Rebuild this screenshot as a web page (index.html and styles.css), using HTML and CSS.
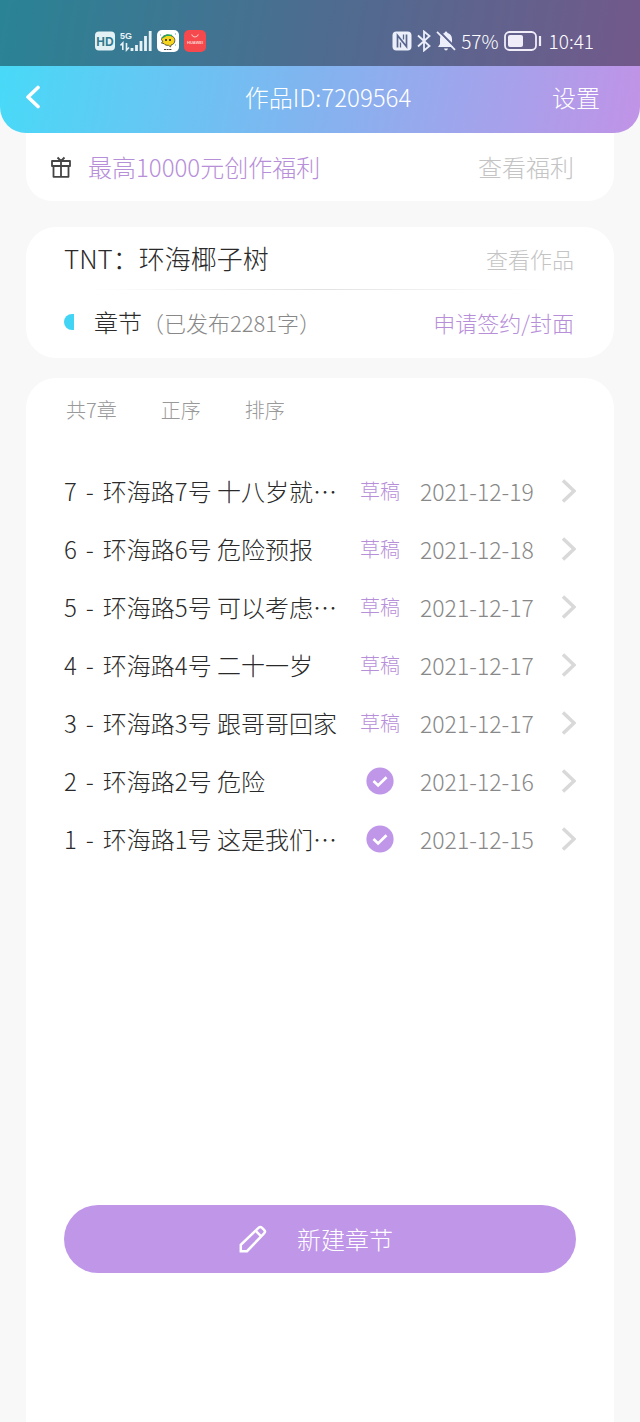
FILE: index.html
```html
<!DOCTYPE html>
<html lang="zh-CN">
	<head>
		<meta charset="UTF-8">
		<meta name="viewport" content="width=device-width, initial-scale=1">
		<title>作品ID:7209564</title>
		<link rel="stylesheet" href="styles.css">
	</head>
	<body>
		<!-- 公用图标 -->
		<svg class="defs" width="0" height="0">
			<symbol id="arrow" viewBox="0 0 14 24">
				<path d="M1 1.5 12 12 1 22.5" fill="none" stroke="#d9d9d9" stroke-width="3.4"/>
			</symbol>
			<symbol id="done" viewBox="0 0 28 28">
				<circle cx="14" cy="14" r="13.6" fill="#bf96e8"/>
				<path d="M7.5 14l4.6 4.4 8.4-8.2" fill="none" stroke="#fff" stroke-width="2.8"/>
			</symbol>
		</svg>

		<header class="header">
			<div class="status-bar">
				<div class="status-group">
					<svg width="20" height="20" viewBox="0 0 20 20">
						<rect x="0" y="0.5" width="20" height="19" rx="4" fill="#e3f1f5"/>
						<text class="hd" x="10" y="14.5" text-anchor="middle">HD</text>
					</svg>
					<svg width="32" height="22" viewBox="0 0 32 22">
						<text class="net" x="0" y="9">5G</text>
						<path d="M2.8 20v-7L.5 15.5M6.5 13v7l2.500-2.500" fill="none" stroke="#e8f2f6" stroke-width="1.6"/>
						<path d="M12 18v3M16.500 15v6M21 11v10M25.500 6v15M30.200 1v20" fill="none" stroke="#e8f2f6" stroke-width="2.8"/>
					</svg>
					<svg width="22" height="22" viewBox="0 0 22 22">
						<rect width="22" height="22" rx="5" fill="#fff"/>
						<path d="M4.5 9.5C5 6 8 5 11 5.2c4 0 7 2 6.8 5.3 0 2.5-1.5 4-3.6 4.4l-.7 2-2-1.6c-2 .2-3.6-.3-4.4-1.6l-2.7-.8 1.4-1.2z" fill="#f5d51d" stroke="#333" stroke-width=".8"/>
						<path d="M5 8l5-3 5 .5" fill="none" stroke="#24a65b" stroke-width="1.4"/>
						<circle cx="9" cy="10" r="1" fill="#222"/>
						<circle cx="13" cy="10" r="1" fill="#222"/>
						<path d="M7 19.500h8" stroke="#444" stroke-width="1.2" stroke-dasharray="2 .6"/>
						<path d="M3 5h1M18 4h1M18 15h1" stroke="#4ab5a0"/>
					</svg>
					<svg width="22" height="22" viewBox="0 0 22 22">
						<rect width="22" height="22" rx="5" fill="#f5494d"/>
						<path d="M7.5 4.500q3.500 5 7 0" fill="none" stroke="#ffc2bd" stroke-width="1.1"/>
						<text class="brand" x="11" y="14" text-anchor="middle">HUAWEI</text>
					</svg>
				</div>
				<div class="status-group">
					<svg width="20" height="20" viewBox="0 0 20 20">
						<rect x=".5" y=".5" width="19" height="19" rx="4" fill="#eceffa"/>
						<path d="M5.500 16.500V4.500l9 11v-12" fill="none" stroke="#59678f" stroke-width="1.7"/>
						<path d="M8.500 16.500v-5M11.500 3.500v5" fill="none" stroke="#59678f" stroke-width="1.3"/>
					</svg>
					<svg width="14" height="22" viewBox="0 0 14 22">
						<path d="M1 5.500 12.500 16 7 20.500v-19L12.500 6 1 16.500" fill="none" stroke="#eceffa" stroke-width="1.8"/>
					</svg>
					<svg width="20" height="22" viewBox="0 0 20 22">
						<path d="M2 17l2-3V9c0-3.500 2-5.500 4.500-6C9 1 11 1 11.500 3 14 3.500 16 6 16 9v5l2 3zM8 18.500h4q-.5 2-2 2t-2-2z" fill="#eceffa"/>
						<path d="M2.600.8 20 18.200" stroke="#5e6590" stroke-width="2"/>
						<path d="M1 1.800l18 18" stroke="#eceffa" stroke-width="1.8"/>
					</svg>
					<span class="battery-num">57%</span>
					<svg width="38" height="20" viewBox="0 0 38 20">
						<rect x="1" y="1" width="31" height="18" rx="4.5" fill="none" stroke="#f0edf8" stroke-width="1.8"/>
						<rect x="4" y="4" width="15" height="12" rx="2" fill="#f0edf8"/>
						<path d="M36 5v10" stroke="#f0edf8" stroke-width="2.2"/>
					</svg>
					<span class="clock">10:41</span>
				</div>
			</div>
			<nav class="nav">
				<button class="back" type="button" aria-label="返回">
					<svg width="18" height="24" viewBox="0 0 18 24">
						<path d="M14 2.5 4 12l10 9.500" fill="none" stroke="#fff" stroke-width="3.6" stroke-linecap="round" stroke-linejoin="round"/>
					</svg>
				</button>
				<h1 class="nav-title">作品ID:7209564</h1>
				<button class="setting" type="button">设置</button>
			</nav>
		</header>

		<main class="main">
			<!-- 福利 -->
			<section class="card welfare">
				<svg width="22" height="24" viewBox="0 0 22 24">
					<path d="M2 6h18v5H2zM3.500 11h15v10.800h-15zM11 6v15.800M11 6 7.500 2.500M11 6l3.500-3.500" fill="none" stroke="#444" stroke-width="1.8" stroke-linejoin="round"/>
				</svg>
				<span class="welfare-text">最高10000元创作福利</span>
				<a class="welfare-link" href="#">查看福利</a>
			</section>

			<!-- 作品信息 -->
			<section class="card work">
				<div class="work-row work-name">
					<h2>TNT：环海椰子树</h2>
					<a class="work-link" href="#">查看作品</a>
				</div>
				<div class="line"></div>
				<div class="work-row work-chapter">
					<i class="half"></i>
					<h2>章节</h2>
					<span class="count">（已发布2281字）</span>
					<a class="work-link apply" href="#">申请签约/封面</a>
				</div>
			</section>

			<!-- 章节列表 -->
			<section class="card chapters">
				<div class="tools">
					<span>共7章</span>
					<button type="button">正序</button>
					<button type="button">排序</button>
				</div>
				<ul class="list">
					<li><a href="#">
						<span class="name"><span>7</span> <span>-</span> <span>环海路7号 十八岁就…</span></span>
						<span class="state">草稿</span>
						<span class="date">2021-12-19</span>
						<svg class="arrow"><use href="#arrow"/></svg>
					</a></li>
					<li><a href="#">
						<span class="name"><span>6</span> <span>-</span> <span>环海路6号 危险预报</span></span>
						<span class="state">草稿</span>
						<span class="date">2021-12-18</span>
						<svg class="arrow"><use href="#arrow"/></svg>
					</a></li>
					<li><a href="#">
						<span class="name"><span>5</span> <span>-</span> <span>环海路5号 可以考虑…</span></span>
						<span class="state">草稿</span>
						<span class="date">2021-12-17</span>
						<svg class="arrow"><use href="#arrow"/></svg>
					</a></li>
					<li><a href="#">
						<span class="name"><span>4</span> <span>-</span> <span>环海路4号 二十一岁</span></span>
						<span class="state">草稿</span>
						<span class="date">2021-12-17</span>
						<svg class="arrow"><use href="#arrow"/></svg>
					</a></li>
					<li><a href="#">
						<span class="name"><span>3</span> <span>-</span> <span>环海路3号 跟哥哥回家</span></span>
						<span class="state">草稿</span>
						<span class="date">2021-12-17</span>
						<svg class="arrow"><use href="#arrow"/></svg>
					</a></li>
					<li><a href="#">
						<span class="name"><span>2</span> <span>-</span> <span>环海路2号 危险</span></span>
						<span class="state"><svg class="done"><use href="#done"/></svg></span>
						<span class="date">2021-12-16</span>
						<svg class="arrow"><use href="#arrow"/></svg>
					</a></li>
					<li><a href="#">
						<span class="name"><span>1</span> <span>-</span> <span>环海路1号 这是我们…</span></span>
						<span class="state"><svg class="done"><use href="#done"/></svg></span>
						<span class="date">2021-12-15</span>
						<svg class="arrow"><use href="#arrow"/></svg>
					</a></li>
				</ul>
				<button class="create" type="button">
					<svg width="28" height="28" viewBox="0 0 28 28">
						<path d="M1.800 26.200v-6.400L19.500 2.800q1.800-1.700 3.600 0l2 2q1.800 1.800 0 3.600L8 26.200zM16.500 5.700l5.700 5.700" fill="none" stroke="#fff" stroke-width="2.5"/>
					</svg>
					<span>新建章节</span>
				</button>
			</section>
		</main>
	</body>
</html>
```
FILE: styles.css
```css
*{
	margin: 0;
	padding: 0;
	box-sizing: border-box;
}

body{
	display: flex;
	flex-direction: column;
	min-height: 100vh;
	background-color: #f8f8f8;
	color: #2a2a2a;
	font-family: "Noto Sans CJK SC", "Noto Sans", sans-serif;
	font-size: 24px;
	font-weight: 300;
	line-height: 32px;
}

h1, h2{
	font-size: inherit;
	font-weight: inherit;
}

a{
	color: inherit;
	text-decoration: none;
}

button{
	border: none;
	background: none;
	color: inherit;
	font: inherit;
	cursor: pointer;
}

ul{
	list-style: none;
}

svg{
	display: block;
	flex: none;
}

.defs{
	position: absolute;
}

/* 顶部 */
.header{
	overflow: hidden;
	border-radius: 0 0 26px 26px;
	background: linear-gradient(100deg, #46dbf8, #80b5f0 48%, #c193e7);
	color: #fff;
}

.status-bar{
	display: flex;
	justify-content: space-between;
	height: 66px;
	padding: 16px 46px 0 95px;
	background-color: rgba(0, 0, 0, .4);
}

.status-group{
	display: flex;
	align-items: center;
	gap: 5px;
	height: 50px;
}

.battery-num, .clock{
	font-size: 19px;
}

.clock{
	margin-left: 2px;
}

.hd{
	fill: #32798e;
	font: bold 12px "Liberation Sans", sans-serif;
}

.net{
	fill: #e8f2f6;
	font: bold 9px "Liberation Sans", sans-serif;
}

.brand{
	fill: #ffd5d2;
	font: bold 4px "Liberation Sans", sans-serif;
}

.nav{
	display: flex;
	align-items: center;
	justify-content: space-between;
	height: 67px;
	padding: 0 40px 6px 24px;
}

.back{
	width: 80px;
	height: 48px;
}

/* 卡片 */
.main{
	display: flex;
	flex: 1;
	flex-direction: column;
	padding: 0 26px;
}

.card{
	border-radius: 30px;
	background-color: #fff;
}

.welfare{
	display: flex;
	align-items: center;
	height: 68px;
	padding: 0 40px 0 24px;
	border-radius: 0 0 26px 26px;
}

.welfare-text{
	margin-left: 16px;
	color: #b78fd9;
}

.welfare-link{
	margin-left: auto;
	color: #c4c4c4;
}

.work{
	margin-top: 26px;
	padding: 0 40px 4px 38px;
}

.work-row{
	display: flex;
	align-items: center;
	height: 64px;
}

.work-name{
	height: 62px;
	font-size: 26px;
}

.line{
	height: 1px;
	margin: 0 24px;
	background: linear-gradient(90deg, #fff, #e2e2e2, #fff);
}

.work-link{
	margin-left: auto;
	color: #c4c4c4;
	font-size: 22px;
}

.apply{
	color: #b78fd9;
}

.half{
	width: 10px;
	height: 16px;
	margin-right: 20px;
	border-radius: 10px 0 0 10px;
	background-color: #42d4f4;
}

.count{
	color: #888;
	font-size: 22px;
}

/* 章节 */
.chapters{
	display: flex;
	flex: 1;
	flex-direction: column;
	margin-top: 20px;
	padding: 0 38px 149px;
	border-radius: 30px 30px 0 0;
}

.tools{
	display: flex;
	align-items: center;
	gap: 44px;
	height: 64px;
	margin-bottom: 20px;
	padding-left: 2px;
	color: #999;
	font-size: 20px;
}

.list a{
	display: flex;
	align-items: center;
	gap: 20px;
	height: 58px;
}

.name{
	display: flex;
	flex: 1;
	gap: 9px;
	white-space: nowrap;
}

.state{
	display: flex;
	justify-content: center;
	width: 40px;
	color: #b78fd9;
	font-size: 20px;
}

.date{
	width: 122px;
	color: #888;
	font-size: 23px;
}

.arrow{
	width: 14px;
	height: 24px;
}

.done{
	width: 28px;
	height: 28px;
}

.create{
	display: flex;
	align-items: center;
	justify-content: center;
	gap: 30px;
	width: 100%;
	height: 68px;
	margin-top: auto;
	padding-right: 8px;
	border-radius: 34px;
	background-color: #bf96e8;
	color: #fff;
}
```
